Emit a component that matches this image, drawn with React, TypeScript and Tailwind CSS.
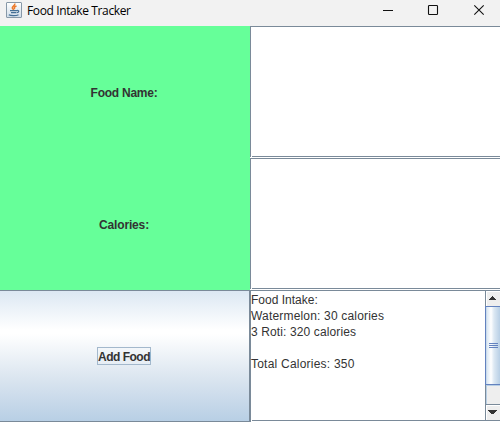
import React from 'react';

const swing = "font-['Liberation_Sans',Arial,sans-serif] text-[12px] text-[#333333]";

function JavaIcon() {
  return (
    <svg width="16" height="16" viewBox="0 0 16 16" className="shrink-0">
      <defs>
        <linearGradient id="tile" x1="0" y1="0" x2="0" y2="1">
          <stop offset="0" stopColor="#ffffff" />
          <stop offset="1" stopColor="#cfdce8" />
        </linearGradient>
      </defs>
      <rect x="0.5" y="0.5" width="15" height="15" rx="0.5" fill="url(#tile)" stroke="#8798a8" />
      <path d="M8.8 1.5C9.5 3.8 5.6 4.5 6.3 6.2L7.8 8M10.5 4C7.8 5 8 5.8 8.8 7" fill="none" stroke="#ec7a2c" strokeWidth="1.5" />
      <path d="M4 8.6H11M11 8.5c2.8-.4 2 2-.2 2.2M5 10.6h5.3M2.8 12.8c2 1.2 7.5 1.1 9.7-.1" fill="none" stroke="#446f95" strokeWidth="1.2" />
    </svg>
  );
}

function TitleBar() {
  return (
    <header className="flex h-[26px] shrink-0 items-start bg-[#f2f2f2]">
      <div className="flex flex-1 items-center gap-[5px] pl-[6px] pt-[2px]">
        <JavaIcon />
        <span className="h-4 whitespace-nowrap font-['Open_Sans','Noto_Sans',sans-serif] text-[12px] leading-[17px] tracking-[-0.38px] text-black">
          Food Intake Tracker
        </span>
      </div>
      <svg width="130" height="22" viewBox="0 0 130 22" fill="none" stroke="#111111">
        <path d="M13 10.5H23" />
        <rect x="58.5" y="5.5" width="9" height="9" rx="0.8" strokeWidth="1.1" />
        <path d="M104.3 5.3L113.7 14.7M113.7 5.3L104.3 14.7" strokeWidth="1.1" />
      </svg>
    </header>
  );
}

function Field() {
  return (
    <div className="flex h-[132px] flex-col bg-white">
      <div className="flex h-[131px] flex-col border-l border-t border-[#7a8a99]">
        <div className="flex-1" />
        <div className="ml-px h-px bg-[#7a8a99]" />
      </div>
    </div>
  );
}

function Arrow({ down = false }: { down?: boolean }) {
  return (
    <svg width="13" height="14" viewBox="0 0 13 14" shapeRendering="crispEdges" fill="#333333">
      {down ? <path d="M1 4h9v1h-1v1h-1v1h-1v1h-3v-1h-1v-1h-1v-1h-1z" /> : <path d="M4 4h2v1h1v1h1v1h1v1h-7v-1h1v-1h1v-1h1z" />}
    </svg>
  );
}

function ScrollBar() {
  return (
    <div className="flex w-[15px] shrink-0 flex-col border-l border-[#7a8a99] bg-[#eeeeee]">
      <div className="h-[15px] border-l border-t border-white">
        <Arrow />
      </div>
      <div className="-ml-px flex h-[79px] flex-col items-center justify-center gap-px border-y border-l border-[#6382bf] bg-[linear-gradient(to_right,#b8cfe5_0,#dce8f3_1px,#ffffff_5px,#dce8f3_8px,#b8cfe5_14px)]">
        <div className="h-px w-[9px] bg-[#6382bf]" />
        <div className="h-px w-[9px] bg-[#6382bf]" />
        <div className="h-px w-[9px] bg-[#6382bf]" />
      </div>
      <div className="flex-1 border-l border-t border-[#b8cfe5]" />
      <div className="h-[16px] border-t border-[#7a8a99]">
        <div className="h-[15px] border-l border-t border-white">
          <Arrow down />
        </div>
      </div>
    </div>
  );
}

export default function App() {
  return (
    <div className="flex h-[422px] w-[500px] flex-col overflow-hidden bg-white">
      <TitleBar />
      <main className="grid flex-1 grid-cols-[250px_250px] grid-rows-[132px_132px_132px]">
        <label className={`${swing} flex items-center justify-center bg-[#66ff99] pr-[2px] pt-[2px] font-bold tracking-[-0.25px]`}>
          Food Name:
        </label>
        <Field />
        <label className={`${swing} flex items-center justify-center bg-[#66ff99] pr-[2px] pt-[2px] font-bold tracking-[-0.15px]`}>
          Calories:
        </label>
        <Field />
        <button
          className={`${swing} flex items-center justify-center border-b border-r border-t border-[#7a8a99] bg-[linear-gradient(to_bottom,#dce8f3_0%,#ffffff_30%,#ffffff_33%,#dce6f0_66%,#b8cfe5_100%)] pr-px font-bold`}
        >
          <span className="flex h-[18px] w-[54px] items-center justify-center whitespace-nowrap border border-[#a3b8cc] pt-[2px] tracking-[-0.5px]">
            Add Food
          </span>
        </button>
        <div className="flex flex-col border-l border-t border-[#7a8a99]">
          <div className="flex h-[129px]">
            <div className={`${swing} flex-1 whitespace-pre pt-px leading-[16px]`}>
              <p>Food Intake:</p>
              <p className="tracking-[0.18px]">Watermelon: 30 calories</p>
              <p className="tracking-[0.12px]">3 Roti: 320 calories</p>
              <p className="h-4" />
              <p className="tracking-[0.22px]">Total Calories: 350</p>
            </div>
            <ScrollBar />
          </div>
          <div className="ml-px h-px bg-[#7a8a99]" />
        </div>
      </main>
    </div>
  );
}
